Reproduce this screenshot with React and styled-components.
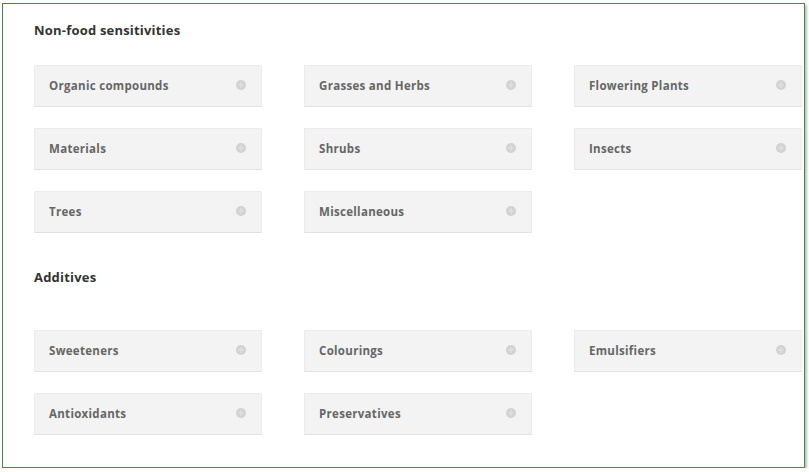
import React from "react";
import styled, { createGlobalStyle } from "styled-components";

const Global = createGlobalStyle`
  html, body { margin: 0; padding: 0; background: #fff; }
  body { font-family: "Open Sans", "Liberation Sans", sans-serif; }
`;

const Frame = styled.div`
  box-sizing: border-box;
  margin: 3px 0 0 2px;
  width: 803px;
  height: 465px;
  border: 1.5px solid #3f8a4c;
  box-shadow: 2px 2px 2px rgba(0, 0, 0, 0.25);
  padding: 17px 0 0 31px;
  overflow: hidden;
`;

const Heading = styled.h2`
  margin: 0;
  font-size: 13px;
  font-weight: 700;
  color: #333;
  line-height: 18px;
  letter-spacing: 0.2px;
  margin-top: ${(p) => p.$top || 0}px;
`;

const Grid = styled.div`
  display: grid;
  grid-template-columns: repeat(3, 228px);
  column-gap: 42px;
  row-gap: 21px;
  margin-top: ${(p) => p.$top}px;
`;

const Card = styled.div`
  box-sizing: border-box;
  height: 42px;
  background: #f3f3f3;
  border: 1px solid #ececec;
  border-bottom-color: #e2e2e2;
  display: flex;
  align-items: center;
  justify-content: space-between;
  padding: 0 15px 2px 14px;
`;

const Label = styled.span`
  font-size: 11.5px;
  font-weight: 700;
  color: #666;
  letter-spacing: 0.3px;
`;

const Dot = styled.span`
  width: 10px;
  height: 10px;
  border-radius: 50%;
  background: #d2d2d2;
  position: relative;
  &::before, &::after {
    content: "";
    position: absolute;
    background: #e4e4e4;
    left: 50%;
    top: 50%;
    transform: translate(-50%, -50%);
  }
  &::before { width: 6px; height: 1px; }
  &::after { width: 1px; height: 6px; }
`;

const groups = [
  {
    title: "Non-food sensitivities",
    top: 0,
    gridTop: 26,
    items: [
      "Organic compounds",
      "Grasses and Herbs",
      "Flowering Plants",
      "Materials",
      "Shrubs",
      "Insects",
      "Trees",
      "Miscellaneous",
    ],
  },
  {
    title: "Additives",
    top: 35,
    gridTop: 44,
    items: ["Sweeteners", "Colourings", "Emulsifiers", "Antioxidants", "Preservatives"],
  },
];

export default function App() {
  return (
    <>
      <Global />
      <Frame>
        {groups.map((g) => (
          <section key={g.title}>
            <Heading $top={g.top}>{g.title}</Heading>
            <Grid $top={g.gridTop}>
              {g.items.map((it) => (
                <Card key={it}>
                  <Label>{it}</Label>
                  <Dot />
                </Card>
              ))}
            </Grid>
          </section>
        ))}
      </Frame>
    </>
  );
}
